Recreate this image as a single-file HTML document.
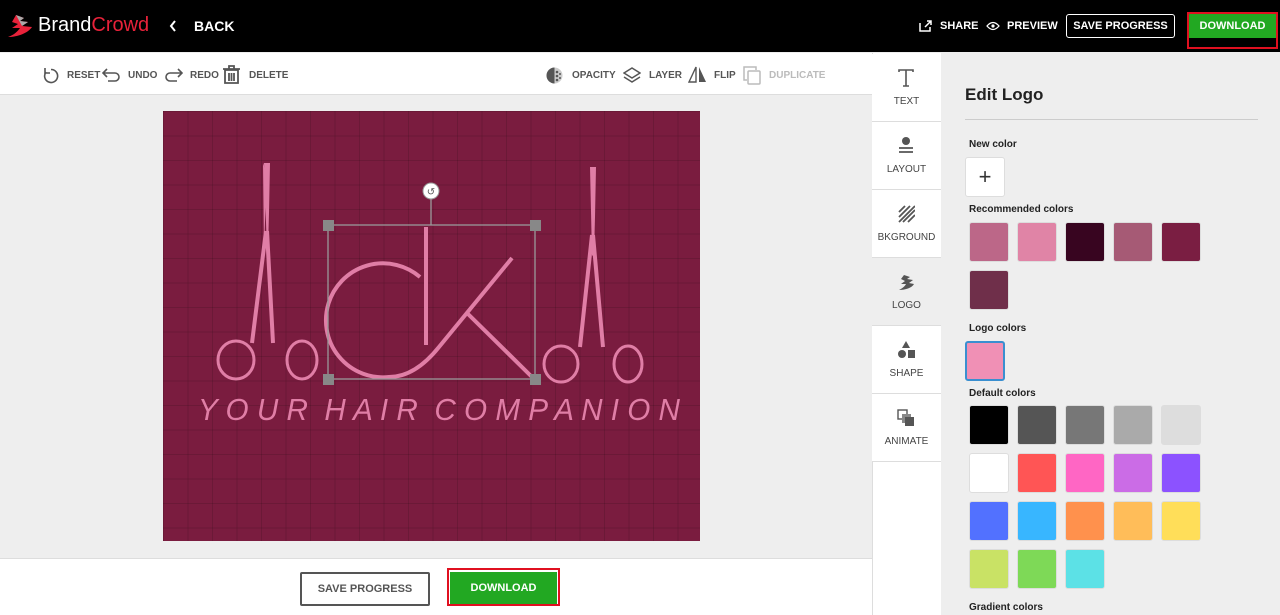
<!DOCTYPE html>
<html><head><meta charset="utf-8"><style>
*{box-sizing:border-box;margin:0;padding:0}
body{width:1280px;height:615px;overflow:hidden;font-family:"Liberation Sans",sans-serif;background:#eee;position:relative}
.a{position:absolute}
.top{left:0;top:0;width:1280px;height:52px;background:#000;color:#fff}
.tb{font-size:10px;font-weight:bold;color:#555;position:absolute;top:70px}
.ic{position:absolute}
.sw{position:absolute;width:40px;height:40px;border-radius:3px;border:1px solid #ddd}
.tab{position:absolute;left:872px;width:69px;height:68px;background:#fff;border-bottom:1px solid #ddd;font-size:10px;color:#444;text-align:center}
.tab span{position:absolute;left:0;right:0;top:42px}
.tab svg{position:absolute;left:25px;top:14px}
.lbl{position:absolute;left:969px;font-size:10px;font-weight:bold;color:#222}
</style></head><body>
<div class="a top">
 <svg class="a" style="left:6px;top:13px" width="30" height="26" viewBox="0 0 30 26"><path d="M10 2l8 3-4 3 8 1-6 4 10 1C22 20 12 24 2 24c6-2 10-6 12-9l-8 0 6-4-6-2z" fill="#e8223a"/><path d="M10 2l8 3-4 3 8 1-6 4" fill="#aaa"/></svg>
 <div class="a" style="left:38px;top:14px;font-size:20px">Brand<span style="color:#e8223a">Crowd</span></div>
 <svg class="a" style="left:169px;top:20px" width="8" height="12"><path d="M6 1L2 6l4 5" stroke="#fff" stroke-width="2" fill="none"/></svg>
 <div class="a" style="left:194px;top:18px;font-size:14px;font-weight:bold">BACK</div>
 <svg class="a" style="left:919px;top:20px" width="13" height="12"><path d="M1 3v8h10V7M6 7l6-6M8 1h4v4" stroke="#fff" stroke-width="1.5" fill="none"/></svg>
 <div class="a" style="left:940px;top:20px;font-size:11px;font-weight:bold">SHARE</div>
 <svg class="a" style="left:986px;top:21px" width="14" height="10"><path d="M1 5q6-7 12 0q-6 7-12 0z" stroke="#fff" stroke-width="1.3" fill="none"/><circle cx="7" cy="5" r="1.6" fill="#fff"/></svg>
 <div class="a" style="left:1007px;top:20px;font-size:11px;font-weight:bold">PREVIEW</div>
 <div class="a" style="left:1066px;top:14px;width:109px;height:24px;border:1px solid #fff;border-radius:3px;font-size:11px;font-weight:bold;text-align:center;line-height:22px">SAVE PROGRESS</div>
 <div class="a" style="left:1187px;top:12px;width:91px;height:37px;border:2px solid #e01020"></div>
 <div class="a" style="left:1189px;top:14px;width:87px;height:24px;background:#22a822;font-size:11px;font-weight:bold;text-align:center;line-height:24px">DOWNLOAD</div>
</div>
<div class="a" style="left:0;top:53px;width:872px;height:42px;background:#fff;border-bottom:1px solid #ddd"></div>
<svg class="ic" style="left:42px;top:66px" width="18" height="18"><path d="M4 6a6.5 6.5 0 1 0 5-2.5" stroke="#555" stroke-width="1.6" fill="none"/><path d="M3 2v5h5" stroke="#555" stroke-width="1.6" fill="none"/></svg>
<div class="tb" style="left:67px">RESET</div>
<svg class="ic" style="left:102px;top:67px" width="20" height="16"><path d="M5 2L1 6l4 4M1 6h12a4 4 0 0 1 0 8H6" stroke="#555" stroke-width="1.6" fill="none"/></svg>
<div class="tb" style="left:128px">UNDO</div>
<svg class="ic" style="left:163px;top:67px" width="20" height="16"><path d="M15 2l4 4-4 4M19 6H7a4 4 0 0 0 0 8h7" stroke="#555" stroke-width="1.6" fill="none"/></svg>
<div class="tb" style="left:190px">REDO</div>
<svg class="ic" style="left:222px;top:65px" width="19" height="19"><path d="M1 4h17M7 4V1h5v3M3 5h13v13H3zM7 8v8M9.5 8v8M12 8v8" stroke="#555" stroke-width="1.8" fill="none"/></svg>
<div class="tb" style="left:249px">DELETE</div>
<svg class="ic" style="left:546px;top:67px" width="17" height="17"><circle cx="8.5" cy="8.5" r="8" fill="#ccc"/><path d="M8.5 .5a8 8 0 0 0 0 16z" fill="#555"/><circle cx="11" cy="5" r="1.3" fill="#555"/><circle cx="11" cy="9" r="1.3" fill="#555"/><circle cx="11" cy="13" r="1.3" fill="#555"/><circle cx="14" cy="7" r="1" fill="#555"/><circle cx="14" cy="11" r="1" fill="#555"/></svg>
<div class="tb" style="left:572px">OPACITY</div>
<svg class="ic" style="left:623px;top:67px" width="18" height="16"><path d="M9 1l8 5-8 5-8-5z" stroke="#555" stroke-width="1.5" fill="none"/><path d="M1 10l8 5 8-5" stroke="#555" stroke-width="1.5" fill="none"/></svg>
<div class="tb" style="left:649px">LAYER</div>
<svg class="ic" style="left:688px;top:66px" width="20" height="17"><path d="M8 1v15H1z" stroke="#555" stroke-width="1.4" fill="none"/><path d="M11 1v15h7z" fill="#555"/></svg>
<div class="tb" style="left:714px">FLIP</div>
<svg class="ic" style="left:743px;top:66px" width="19" height="19"><path d="M4 14H1V1h12v3" stroke="#bbb" stroke-width="1.5" fill="none"/><rect x="5" y="5" width="12" height="13" stroke="#bbb" stroke-width="1.5" fill="none" rx="1"/></svg>
<div class="tb" style="left:769px;color:#bbb">DUPLICATE</div>
<div class="a" style="left:163px;top:111px;width:537px;height:430px;background:#7a1c3f;background-image:linear-gradient(rgba(0,0,0,.12) 1px,transparent 1px),linear-gradient(90deg,rgba(0,0,0,.12) 1px,transparent 1px);background-size:24.5px 24.5px"></div>
<svg class="a" style="left:163px;top:111px" width="537" height="430" viewBox="0 0 537 430">
 <g fill="#e07ea6">
  <path d="M101 52h6l-1 50-1 37 1 0-2 2z"/><path d="M100 52q4 10 3 30l-2 58z" />
  <path d="M427 56h6l-1 50-1 37-2 2z"/>
 </g>
 <g fill="none" stroke="#e07ea6" stroke-width="3">
  <path d="M103 120l-14 112M104 120l6 112" stroke-width="4"/>
  <ellipse cx="73" cy="249" rx="18" ry="19"/><ellipse cx="139" cy="249" rx="15" ry="19"/>
  <path d="M429 124l-12 112M430 124l10 112" stroke-width="4"/>
  <ellipse cx="398" cy="253" rx="17" ry="18"/><ellipse cx="465" cy="253" rx="14" ry="18"/>
  <path d="M257 166A57 57 0 1 0 226 266Q252 266 276 236L349 147" stroke-width="4"/>
  <path d="M263 116v118M304 202l65 64" stroke-width="4"/>
 </g>
 <g fill="none" stroke="#999" stroke-width="1.3"><rect x="165" y="114" width="207" height="154"/><path d="M268 114v-28"/></g>
 <g fill="#888"><rect x="160" y="109" width="11" height="11"/><rect x="367" y="109" width="11" height="11"/><rect x="160" y="263" width="11" height="11"/><rect x="367" y="263" width="11" height="11"/></g>
 <circle cx="268" cy="80" r="8" fill="#fff" stroke="#999"/><text x="268" y="84" font-size="10" text-anchor="middle" fill="#555">↺</text>
 <text x="35" y="309" font-size="31" font-style="italic" textLength="482" lengthAdjust="spacingAndGlyphs" fill="#e07ea6" font-family="Liberation Sans">Y O U R &#160;H A I R &#160;C O M P A N I O N</text>
</svg>
<div class="a" style="left:0;top:558px;width:872px;height:57px;background:#fff;border-top:1px solid #ddd"></div>
<div class="a" style="left:300px;top:572px;width:130px;height:34px;border:2px solid #555;border-radius:2px;font-size:11px;font-weight:bold;color:#555;text-align:center;line-height:30px">SAVE PROGRESS</div>
<div class="a" style="left:447px;top:568px;width:113px;height:38px;border:2px solid #e01020"></div>
<div class="a" style="left:450px;top:572px;width:107px;height:32px;background:#22a822;font-size:11px;font-weight:bold;color:#fff;text-align:center;line-height:32px">DOWNLOAD</div>
<div class="a" style="left:872px;top:53px;width:69px;height:562px;background:#fff;border-left:1px solid #ddd"></div>
<div class="tab" style="top:54px"><svg width="18" height="20"><path d="M2 4V2h14v2M9 2v16M6 18h6" stroke="#555" stroke-width="1.6" fill="none"/></svg><span>TEXT</span></div>
<div class="tab" style="top:122px"><svg width="18" height="20"><circle cx="9" cy="5" r="4" fill="#555"/><path d="M2 12h14M2 16h14" stroke="#555" stroke-width="1.8"/></svg><span>LAYOUT</span></div>
<div class="tab" style="top:190px"><svg width="18" height="20"><path d="M2 8l6-6M2 13l11-11M2 18l16-16M6 18l12-12M11 18l7-7" stroke="#555" stroke-width="1.8"/></svg><span>BKGROUND</span></div>
<div class="tab" style="top:258px;background:#eee"><svg width="18" height="20"><path d="M7 3l6 2-3 2 6 1-4 3 5 1C15 16 8 18 2 18c4-2 6-4 7-6H4l4-3-4-2z" fill="#555"/></svg><span>LOGO</span></div>
<div class="tab" style="top:326px"><svg width="18" height="20"><path d="M9 1l4 7H5z" fill="#555"/><circle cx="5" cy="14" r="4" fill="#555"/><rect x="11" y="10" width="7" height="8" fill="#555"/></svg><span>SHAPE</span></div>
<div class="tab" style="top:394px"><svg width="18" height="20"><rect x="1" y="2" width="9" height="9" stroke="#555" stroke-width="1.4" fill="none"/><rect x="5" y="6" width="9" height="9" fill="#888"/><rect x="8" y="9" width="9" height="9" fill="#555"/></svg><span>ANIMATE</span></div>
<div class="a" style="left:965px;top:85px;font-size:17px;font-weight:bold;color:#222">Edit Logo</div>
<div class="a" style="left:965px;top:119px;width:293px;height:1px;background:#ccc"></div>
<div class="lbl" style="top:139px">New color</div>
<div class="sw" style="left:965px;top:157px;background:#fff;font-size:22px;text-align:center;line-height:38px;color:#333">+</div>
<div class="lbl" style="top:204px">Recommended colors</div>
<div class="sw" style="left:969px;top:222px;background:#bc6788"></div>
<div class="sw" style="left:1017px;top:222px;background:#e084a6"></div>
<div class="sw" style="left:1065px;top:222px;background:#380520"></div>
<div class="sw" style="left:1113px;top:222px;background:#a65a75"></div>
<div class="sw" style="left:1161px;top:222px;background:#7a1e42"></div>
<div class="sw" style="left:969px;top:270px;background:#6f2f4a"></div>
<div class="lbl" style="top:323px">Logo colors</div>
<div class="sw" style="left:965px;top:341px;background:#f090b5;border:2px solid #3a8fd0"></div>
<div class="lbl" style="top:388px">Default colors</div>
<div class="sw" style="left:969px;top:405px;background:#000"></div>
<div class="sw" style="left:1017px;top:405px;background:#555"></div>
<div class="sw" style="left:1065px;top:405px;background:#777"></div>
<div class="sw" style="left:1113px;top:405px;background:#aaa"></div>
<div class="sw" style="left:1161px;top:405px;background:#ddd"></div>
<div class="sw" style="left:969px;top:453px;background:#fff"></div>
<div class="sw" style="left:1017px;top:453px;background:#ff5555"></div>
<div class="sw" style="left:1065px;top:453px;background:#ff66c4"></div>
<div class="sw" style="left:1113px;top:453px;background:#cb6ce6"></div>
<div class="sw" style="left:1161px;top:453px;background:#8c52ff"></div>
<div class="sw" style="left:969px;top:501px;background:#5271ff"></div>
<div class="sw" style="left:1017px;top:501px;background:#38b6ff"></div>
<div class="sw" style="left:1065px;top:501px;background:#ff914d"></div>
<div class="sw" style="left:1113px;top:501px;background:#ffbd59"></div>
<div class="sw" style="left:1161px;top:501px;background:#ffde59"></div>
<div class="sw" style="left:969px;top:549px;background:#c9e265"></div>
<div class="sw" style="left:1017px;top:549px;background:#7ed957"></div>
<div class="sw" style="left:1065px;top:549px;background:#5ce1e6"></div>
<div class="lbl" style="top:602px">Gradient colors</div>
</body></html>
